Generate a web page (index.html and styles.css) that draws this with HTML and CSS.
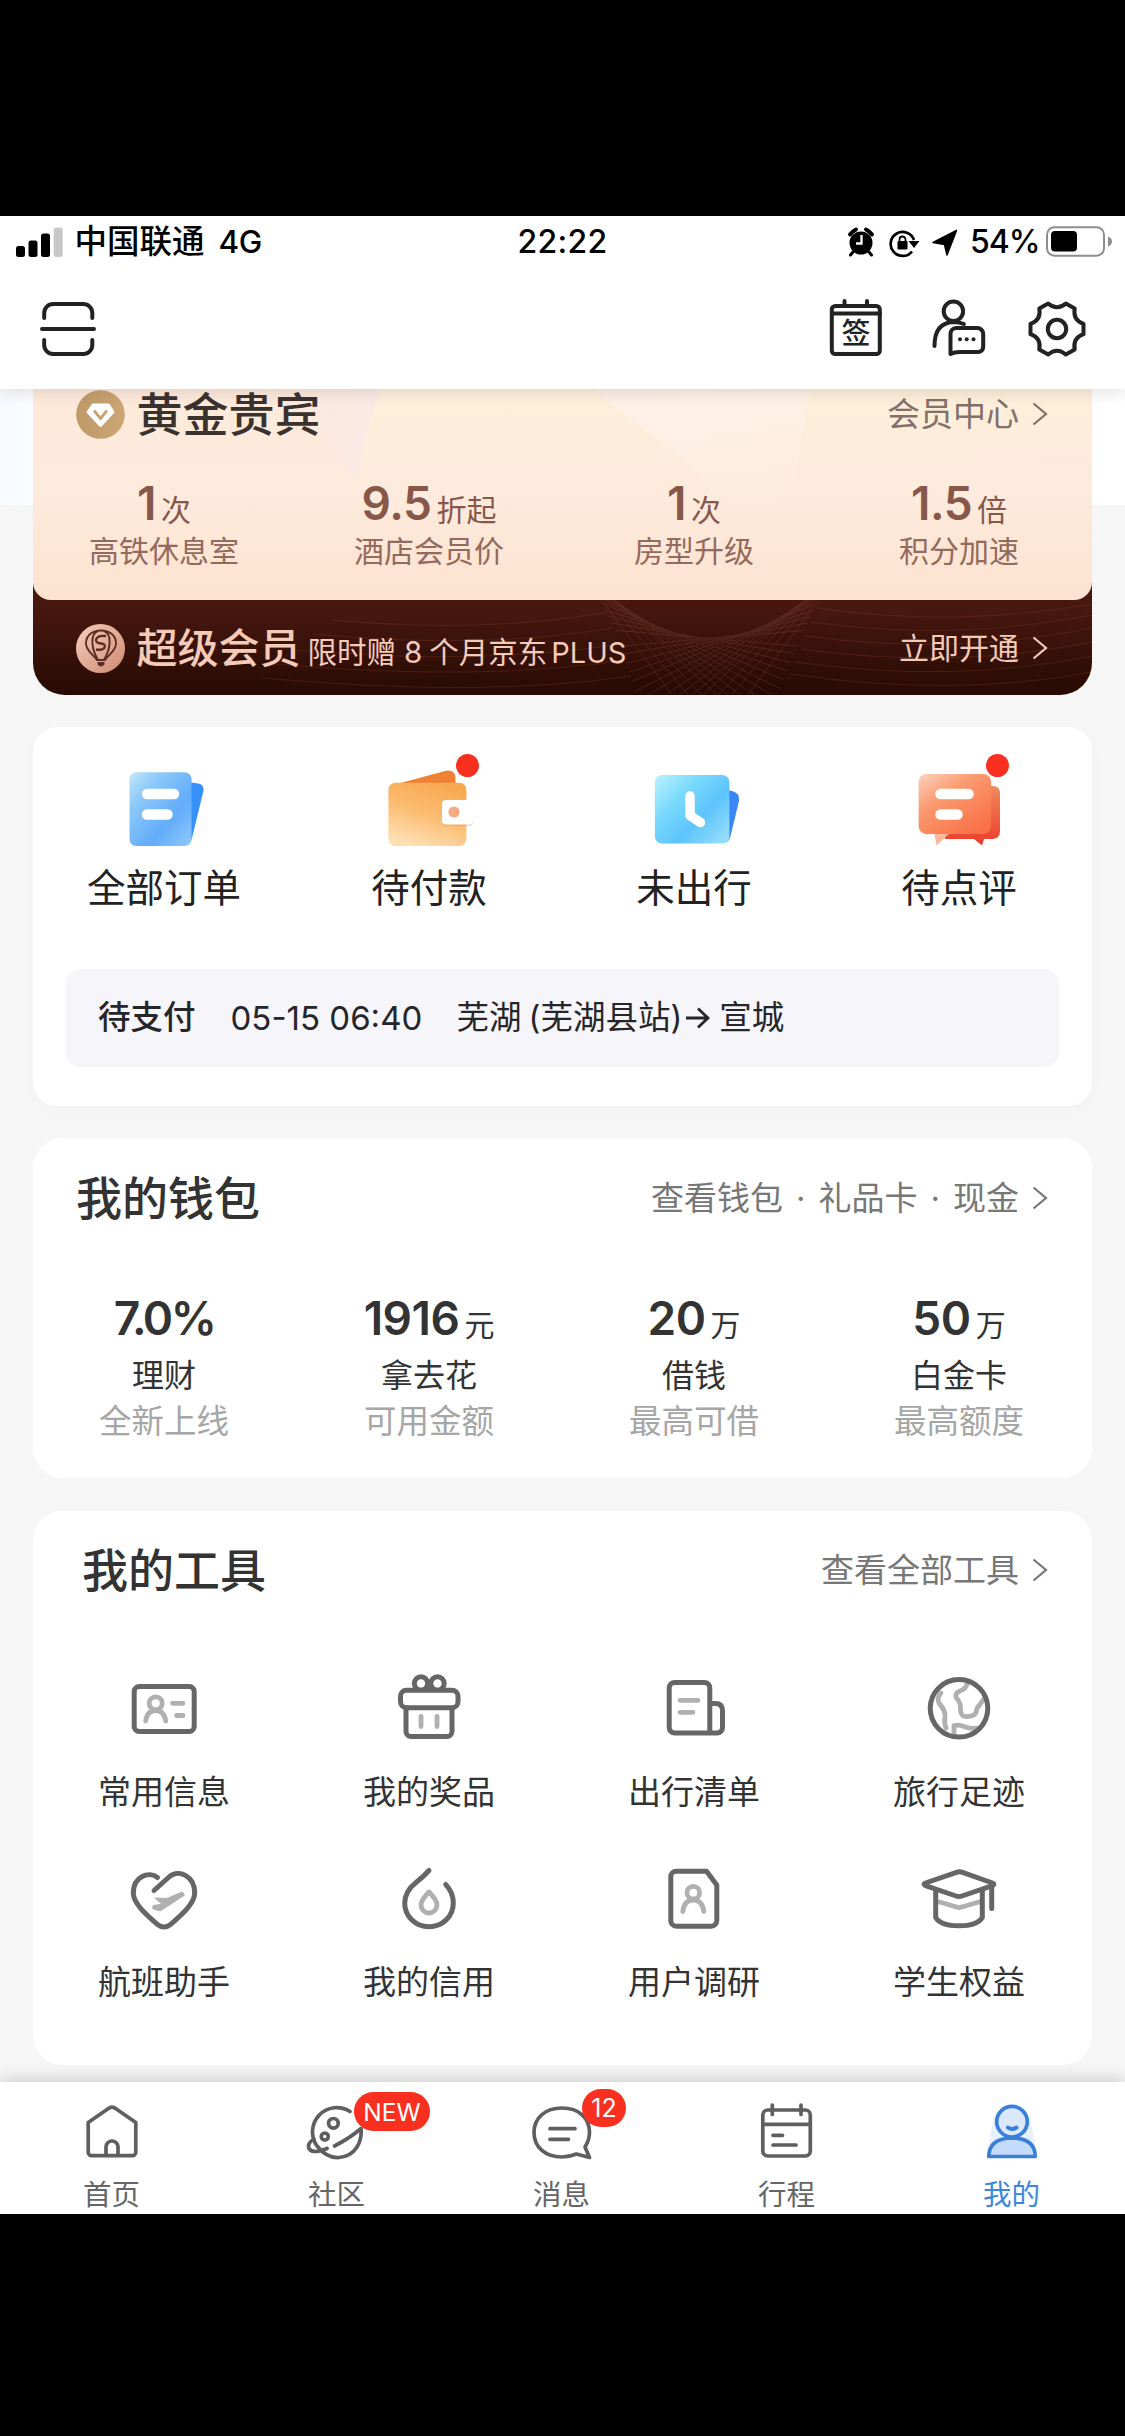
FILE: index.html
```html
<!DOCTYPE html>
<html lang="zh-CN">
<head>
<meta charset="utf-8">
<title>我的</title>
<link rel="stylesheet" href="styles.css">
</head>
<body>
<div class="app">
  <header class="top">
    <div class="status">
      <svg class="signal" width="48" height="30" viewBox="0 0 48 30"><rect x="0" y="19" width="9" height="11" rx="2.5"/><rect x="12.5" y="13.5" width="9" height="16.5" rx="2.5"/><rect x="25" y="6.500" width="9" height="23.500" rx="2.500"/><rect x="37.700" y="0.500" width="9" height="29.500" rx="2.500" fill="#c8c8c8"/></svg>
      <span class="carrier">中国联通</span>
      <span class="network">4G</span>
      <span class="clock">22:22</span>
      <span class="status-right">
        <svg width="100" height="32" viewBox="0 0 100 32">
          <circle cx="13" cy="17" r="11.500"/>
          <path d="M2 8.500a18 18 0 0 1 6-5M24 8.500a18 18 0 0 0-6-5" stroke="#000" stroke-width="4" stroke-linecap="round" fill="none"/>
          <path d="M5 26l-2.500 3M21 26l2.500 3" stroke="#000" stroke-width="3" stroke-linecap="round"/>
          <path d="M13.500 9v8.500H8" stroke="#fff" stroke-width="2.300" fill="none"/>
          <path d="M64 25.500A12 12 0 1 1 66 14" stroke="#000" stroke-width="2.700" fill="none"/>
          <path d="M60.500 15h11l-5.500 7z"/><rect x="49.500" y="15" width="10" height="8.500" rx="1.200"/><path d="M51.500 15.500v-2a3 3 0 0 1 6 0v2" stroke="#000" stroke-width="1.800" fill="none"/>
          <path d="M85.500 17.500L109 5.500 99.500 30 97 19.500z" stroke="#000" stroke-width="1.500" stroke-linejoin="round" transform="translate(-.5 -1)"/>
        </svg>
        <span class="percent">54%</span>
        <svg width="66" height="31" viewBox="0 0 66 31"><rect x="1" y="1.200" width="57" height="28.500" rx="7.500" fill="none" stroke="#8e8e8e" stroke-width="2"/><rect x="5" y="5" width="26" height="20.500" rx="4"/><path d="M62 10.500q4 1.500 4 5t-4 5z" fill="#8e8e8e"/></svg>
      </span>
    </div>
    <nav class="toolbar">
      <svg class="line-icon" width="64" height="66" viewBox="0 0 64 66"><path d="M8.200 22v-5a9 9 0 0 1 9-9h30.100a9 9 0 0 1 9 9v5M6 33h52M8.200 44v5a9 9 0 0 0 9 9h30.100a9 9 0 0 0 9-9v-5"/></svg>
      <div class="actions">
        <svg class="line-icon" width="64" height="66" viewBox="0 0 64 66"><rect x="7.800" y="10" width="48" height="48" rx="3.500"/><path d="M8 17.500h48M20.500 5v4M43 5v4"/><text x="32" y="47.500" class="sign">签</text></svg>
        <svg class="line-icon" width="64" height="66" viewBox="0 0 64 66"><circle cx="27.400" cy="15.300" r="9.700"/><path d="M8.500 50C8.500 34 15 26.500 27.400 26c4.500 0 7.500.8 10.500 2"/><path d="M24.500 58V38a6 6 0 0 1 6-6h20.700a6 6 0 0 1 6 6v13a5 5 0 0 1-5 5H34q-6 0-9.500 2z"/><g fill="#222" stroke="none"><circle cx="34" cy="43.300" r="2"/><circle cx="40.700" cy="43.300" r="2"/><circle cx="47.500" cy="43.300" r="2"/></g></svg>
        <svg class="line-icon" width="64" height="66" viewBox="-32 -33 64 66"><circle r="9.200"/><path d="M26.500 5.200Q15.600 9 17.700 20.400L8.800 25.500Q0 18-8.800 25.500L-17.700 20.400Q-15.600 9-26.500 5.200V-5.200Q-15.600-9-17.700-20.400L-8.800-25.500Q0-18 8.800-25.500L17.700-20.400Q15.600-9 26.500-5.200Z"/></svg>
      </div>
    </nav>
  </header>

  <main class="content">
    <section class="member">
      <div class="gold">
        <svg class="facets" viewBox="0 0 1059 211" preserveAspectRatio="none"><defs><linearGradient id="pinkFade" x1="0" x2="1"><stop offset="0" stop-color="#f9e9ea" stop-opacity="0"/><stop offset="1" stop-color="#f9e9ea" stop-opacity=".75"/></linearGradient><linearGradient id="creamFade" x1="0" y1="0" x2="0" y2="1"><stop offset="0" stop-color="#fdf0da"/><stop offset="1" stop-color="#fdf0da" stop-opacity="0"/></linearGradient><linearGradient id="paleFade" x1="0" y1="0" x2=".3" y2="1"><stop offset=".1" stop-color="#fdf1ea" stop-opacity=".9"/><stop offset="1" stop-color="#fdf1ea" stop-opacity="0"/></linearGradient></defs><path d="M345 0H1059V60Q700 110 325 80Z" fill="url(#creamFade)"/><path d="M250 0H346L322 90Z" fill="url(#pinkFade)"/><path d="M560 0H778L750 150Z" fill="url(#paleFade)"/></svg>
        <div class="member-head">
          <svg width="50" height="50" viewBox="0 0 50 50"><defs><linearGradient id="coin" x1="0" x2="1"><stop offset="0" stop-color="#bd9a68"/><stop offset="1" stop-color="#cda574"/></linearGradient></defs><circle cx="24.500" cy="25.500" r="24.300" fill="url(#coin)"/><path d="M17 16h15.500l4.500 7-12.500 13.500L12 23z" fill="#fff" stroke="#fff" stroke-width="3" stroke-linejoin="round"/><path d="M18 21.500l6.500 8 6.500-8" stroke="#c9a36f" stroke-width="2.800" fill="none"/></svg>
          <h2>黄金贵宾</h2>
          <a class="more">会员中心<svg class="chev" width="16" height="24" viewBox="0 0 16 24"><path d="M1.500 1.500L14 12 1.500 22.500"/></svg></a>
        </div>
        <div class="grid perks">
          <div><p class="num">1<small>次</small></p><p class="perk">高铁休息室</p></div>
          <div><p class="num">9.5<small>折起</small></p><p class="perk">酒店会员价</p></div>
          <div><p class="num">1<small>次</small></p><p class="perk">房型升级</p></div>
          <div><p class="num">1.5<small>倍</small></p><p class="perk">积分加速</p></div>
        </div>
      </div>
      <div class="super">
        <svg class="mesh" viewBox="0 0 1059 95">
          <defs><clipPath id="net"><path d="M567 0H785Q765 40 745 95H602Q590 40 567 0Z"/></clipPath>
          <path id="rays" d="M-110 29L110 48M-110 21L110 58M-110 14L110 70M-110 8L110 82M-110 2L110 95M-110-2L110 109M-110-6L110 123M-110-9L110 139M-110-11L110 155M-110-12L110 172M-110-13L110 190M-110-12L110 219M-110-9L110 250M-110-2L110 293"/></defs>
          <g clip-path="url(#net)" stroke="#a06050" stroke-width="1" opacity=".24"><use href="#rays" transform="translate(677)"/><use href="#rays" transform="translate(677) scale(-1 1)"/></g>
          <g fill="none" stroke="#8f4636" opacity=".28"><path d="M785 8Q920 28 1059 4M778 22Q920 42 1059 15M772 36Q920 56 1059 28M768 49Q920 70 1059 42M762 62Q920 84 1059 56M757 74Q920 98 1059 72M575 12Q450 34 300 20M580 28Q450 50 280 34M586 44Q450 66 260 50M592 60Q450 82 240 64M598 76Q450 98 230 78"/></g>
        </svg>
        <svg class="badge" width="50" height="50" viewBox="0 0 50 50"><defs><linearGradient id="rose" x1="0" y1="0" x2="1" y2="1"><stop offset="0" stop-color="#f7cdbd"/><stop offset="1" stop-color="#cd8a72"/></linearGradient></defs><circle cx="24.500" cy="25.500" r="24.500" fill="url(#rose)"/><g fill="none" stroke="#5d2c22" stroke-width="1.900"><path d="M21 37C17 31 10 28 10 20.500 10 12 17 7.500 25 7.500S40 12 40 20.500C40 28 33 31 29 37ZM22 37C15 25 14 11 22 8M28 37C35 25 36 11 28 8"/><path d="M30 13q-9-1-10 4 0 3 5 3.500t3.500 4q-1.500 3-8.500 2" stroke-width="2.300"/></g><path d="M21.500 39h7v2.500q-3.500 4-7 0z" fill="#5d2c22"/></svg>
        <h3>超级会员</h3><p class="promo">限时赠<i>8</i>个月京东<b>PLUS</b></p>
        <a class="more">立即开通<svg class="chev" width="16" height="24" viewBox="0 0 16 24"><path d="M1.500 1.500L14 12 1.500 22.500"/></svg></a>
      </div>
    </section>

    <section class="card orders">
      <div class="grid">
        <div class="order">
          <svg width="96" height="90" viewBox="0 0 96 90"><defs><linearGradient id="b1" x1="0" y1="0" x2="1" y2="1"><stop offset="0" stop-color="#c3e7fc"/><stop offset=".25" stop-color="#8fcaf9"/><stop offset=".65" stop-color="#62acfa"/><stop offset="1" stop-color="#8fc9fb"/></linearGradient></defs><path d="M60 14l22 3.500q6 1 5.500 7L76 72q-2 7-8 7z" fill="#3590f8"/><rect x="13.500" y="6.300" width="62" height="73.700" rx="7" fill="url(#b1)"/><path d="M31 28h27M31 48.500h20.500" stroke="#fff" stroke-width="10.500" stroke-linecap="round"/></svg>
          <p>全部订单</p>
        </div>
        <div class="order">
          <span class="dot"></span>
          <svg width="96" height="90" viewBox="0 0 96 90"><defs><linearGradient id="o1" x1=".7" y1="0" x2=".3" y2="1"><stop offset="0" stop-color="#f8a84e"/><stop offset=".5" stop-color="#fbbc72"/><stop offset="1" stop-color="#fee0b5"/></linearGradient></defs><path d="M12 19L64 5q9-2 10.500 6v12H12z" fill="#ee8134"/><rect x="7.400" y="16.700" width="78" height="63.300" rx="7" fill="url(#o1)"/><rect x="61" y="36" width="31" height="24" rx="4" fill="#c98a5a" opacity=".3"/><rect x="61" y="34" width="31" height="24.500" rx="4" fill="#fff"/><circle cx="73" cy="46" r="5.600" fill="#f7a981"/></svg>
          <p>待付款</p>
        </div>
        <div class="order">
          <svg width="96" height="90" viewBox="0 0 96 90"><defs><linearGradient id="c1" x1="0" y1="0" x2="1" y2=".9"><stop offset="0" stop-color="#bcf1fb"/><stop offset=".35" stop-color="#79d9fd"/><stop offset=".65" stop-color="#5dc4fc"/><stop offset="1" stop-color="#96defb"/></linearGradient></defs><path d="M72 22l14 3q8 2 7 10L84 72q-2 5-7 5z" fill="#3a86f6"/><rect x="8.900" y="9" width="74.500" height="68.500" rx="7" fill="url(#c1)"/><path d="M44 30v19.500l10.500 7" stroke="#fff" stroke-width="9.500" stroke-linecap="round" stroke-linejoin="round" fill="none"/></svg>
          <p>未出行</p>
        </div>
        <div class="order">
          <span class="dot"></span>
          <svg width="96" height="90" viewBox="0 0 96 90"><defs><linearGradient id="r1" x1="0" y1="0" x2=".8" y2="1"><stop offset="0" stop-color="#fcd2bd"/><stop offset=".4" stop-color="#fa9a70"/><stop offset="1" stop-color="#fb6f45"/></linearGradient><linearGradient id="r2" x1="0" y1="0" x2="0" y2="1"><stop offset="0" stop-color="#f08a5b"/><stop offset="1" stop-color="#ed3a2c"/></linearGradient></defs><path d="M34 20h48q7 0 7 8v37q0 8-8 8h-8l-2 6.500-8-6.500H34z" fill="url(#r2)"/><path d="M23 66l2.500 13.500L40 66z" fill="#fdb79d"/><rect x="7.600" y="8" width="72.500" height="60" rx="8" fill="url(#r1)"/><path d="M29.500 28h28M29.500 48.500h17" stroke="#fff" stroke-width="10.500" stroke-linecap="round"/></svg>
          <p>待点评</p>
        </div>
      </div>
      <div class="pending"><strong>待支付</strong><time>05-15 06:40</time><span>芜湖<i>(</i>芜湖县站)</span><svg width="25" height="26" viewBox="0 0 25 26"><path d="M1 13h22M13 3.500L23 13 13 22.500"/></svg><span>宣城</span></div>
    </section>

    <section class="card wallet">
      <div class="card-head"><h2>我的钱包</h2><a class="more">查看钱包<i>·</i>礼品卡<i>·</i>现金<svg class="chev" width="16" height="24" viewBox="0 0 16 24"><path d="M1.500 1.500L14 12 1.500 22.500"/></svg></a></div>
      <div class="grid">
        <div><p class="num rate">7.0%</p><p class="name">理财</p><p class="hint">全新上线</p></div>
        <div><p class="num">1916<small>元</small></p><p class="name">拿去花</p><p class="hint">可用金额</p></div>
        <div><p class="num">20<small>万</small></p><p class="name">借钱</p><p class="hint">最高可借</p></div>
        <div><p class="num">50<small>万</small></p><p class="name">白金卡</p><p class="hint">最高额度</p></div>
      </div>
    </section>

    <section class="card tools">
      <div class="card-head"><h2>我的工具</h2><a class="more">查看全部工具<svg class="chev" width="16" height="24" viewBox="0 0 16 24"><path d="M1.500 1.500L14 12 1.500 22.500"/></svg></a></div>
      <div class="grid tool-grid">
        <div class="tool"><svg viewBox="0 0 80 76"><g class="soft"><circle cx="31.700" cy="33.300" r="6.500"/><path d="M21.700 51q1.500-10.500 10-10.500t10 10.500M48.500 33.300H59M52.500 45.500H59"/></g><rect x="10.200" y="16.500" width="60" height="45" rx="5"/></svg><p>常用信息</p></div>
        <div class="tool"><svg viewBox="0 0 80 76"><path class="soft" d="M32 46.500v10M48 46.500v10"/><circle cx="32" cy="13.500" r="6.700"/><circle cx="48.500" cy="13.500" r="6.700"/><rect x="11.500" y="20.200" width="57.500" height="17.500" rx="6" fill="#fff"/><path d="M17 38v23.500a5 5 0 0 0 5 5h36a5 5 0 0 0 5-5V38"/></svg><p>我的奖品</p></div>
        <div class="tool"><svg viewBox="0 0 80 76"><path class="soft" d="M26 30.300h18M26 42.300h13"/><path d="M55.800 63V18a5.500 5.500 0 0 0-5.500-5.500h-29.600a5.500 5.500 0 0 0-5.500 5.500v39.500a5.500 5.500 0 0 0 5.500 5.500h42.300a5.500 5.500 0 0 0 5.500-5.500V40.500q0-7-7-7H56"/></svg><p>出行清单</p></div>
        <div class="tool"><svg viewBox="0 0 80 76"><path class="soft" d="M22 23q-5 5-1.500 11 6 6 5.500 13-1 6 1 11M48 14q-1 5-7 7-6 3-3.500 7 4.500 5 4 11 0 8 6 7.500 8 0 9.500-4 .5-5 4-8l4-6M35 66V55.500q5-1 10 1 6 2.500 12 1.500"/><circle cx="40" cy="38.300" r="28.800"/></svg><p>旅行足迹</p></div>
        <div class="tool"><svg viewBox="0 -2 80 76"><path d="M31.700 36.300l11.600.4 15-6.400 1.700 2.700-24 15.500-7-2 .5-2.800 9-1.400z" fill="#b0b0b0" stroke="#b0b0b0" stroke-width="1.500" stroke-linejoin="round"/><path d="M33.500 15.500C25 9 9.300 14 9.300 31 9.300 42 24 54 33.500 62.500Q40 67.500 46.500 62.500C56 54 70.700 42 70.700 31 70.700 14 54.500 6 44.500 15.500L30 28.500"/></svg><p>航班助手</p></div>
        <div class="tool"><svg viewBox="0 -2 80 76"><path class="soft" d="M40 30q-8 8-8 13a8 8 0 0 0 16 0q0-5-8-13z"/><path d="M40 8.500Q34 15 27 20.500C20 26 15.700 34 15.700 41.300a24.300 23.500 0 0 0 48.600 0C64.300 33 62 28 56.700 22.500"/></svg><p>我的信用</p></div>
        <div class="tool"><svg viewBox="0 -2 80 76"><g class="soft"><circle cx="39.300" cy="30.700" r="6.300"/><path d="M28.800 49.500q1.500-11.500 10.500-11.500t10.500 11.500"/></g><path d="M22.300 9.200h30.200L62.800 23v35.700a5.500 5.500 0 0 1-5.500 5.500h-35a5.500 5.500 0 0 1-5.500-5.500V14.700a5.500 5.500 0 0 1 5.500-5.500z"/></svg><p>用户调研</p></div>
        <div class="tool"><svg viewBox="0 -2 80 76"><path class="soft" d="M20.700 40L40 45.700 60 40"/><path d="M16.700 28v27.500q5 8.300 23.300 8.300t23.300-8.300V28M72.700 25v21.500"/><path d="M37.500 10.300q3-1 6 0L73.500 21q3 1.300 0 2.600L43 34q-3 1.200-6 0L6.500 23.600q-3-1.300 0-2.600z" fill="#fff"/></svg><p>学生权益</p></div>
      </div>
    </section>
  </main>

  <nav class="tabs">
    <div class="tab"><svg viewBox="0 0 64 64"><path d="M8.200 22.500L29.500 7.800q2.500-1.500 5 0L55.800 22.500V52.200a3.500 3.500 0 0 1-3.500 3.500H11.700a3.500 3.500 0 0 1-3.500-3.500zM26 55V47a6 6 0 0 1 12 0v8"/></svg><p>首页</p></div>
    <div class="tab"><svg viewBox="0 0 64 64"><path d="M45 11.500A24.300 24.300 0 0 0 12 46q10 12.500 22 11.500 12-1 18-10.500 5-8 4-18.500Q45 38 29.500 46M9 39q-7 4-5 9.500 3.500 6 18 0"/><circle cx="28.400" cy="23.300" r="4.800"/><circle cx="19.800" cy="36.500" r="3.500"/></svg><span class="pill new">NEW</span><p>社区</p></div>
    <div class="tab"><svg viewBox="0 0 64 64"><path d="M59.500 57.500L55 47q4.500-7 4.500-14.500C59.500 18 49 8 32 8S4 18 4 32.500 15 57 32 57q7 0 14.500-3zM20 28.700h25M20 39.300h18.500"/></svg><span class="pill count">12</span><p>消息</p></div>
    <div class="tab"><svg viewBox="0 0 64 64"><rect x="7.800" y="10" width="47.500" height="46" rx="5"/><path d="M8 24.300h47M17.300 5v9.500M46 5v9.500M18 35.300h9.500M18 45h23"/></svg><p>行程</p></div>
    <div class="tab active"><svg viewBox="0 0 64 64"><path d="M14 16h36l7 41H7z" fill="#dceaff" stroke="none" opacity=".7"/><path d="M8.800 56.500q0-18 23.200-18.500 23.200.5 23.200 18.500z" fill="#c5dbfa"/><circle cx="32" cy="21.700" r="15.300" fill="#dbe8fb"/><path d="M28 27.500q4 3 8.500 0" stroke-width="4"/></svg><p>我的</p></div>
  </nav>
</div>
</body>
</html>
```
FILE: styles.css
```css
* { box-sizing: border-box; margin: 0; padding: 0; }
body {
  width: 1125px;
  height: 2436px;
  padding: 216px 0 222px;
  background: #000;
  color: #333;
  font-family: Inter, "Noto Sans CJK SC", sans-serif;
  overflow: hidden;
}
svg { display: block; flex: none; }
i, b { font-style: normal; font-weight: inherit; }
.app {
  display: flex;
  flex-direction: column;
  height: 1998px;
  background: #f6f6f6;
  overflow: hidden;
}

/* status bar and toolbar */
.top {
  position: relative;
  z-index: 2;
  flex: none;
  height: 173px;
  background: #fff;
  box-shadow: 0 4px 14px rgba(60, 50, 50, .13);
}
.status {
  position: relative;
  display: flex;
  align-items: center;
  height: 51px;
  padding: 0 13px 0 16px;
  color: #000;
  font-size: 32px;
  line-height: 40px;
}
.carrier { margin-left: 10.500px; padding-top: 1px; font-size: 32.500px; font-weight: 500; }
.network { margin-left: 14px; font-size: 31.500px; font-weight: 500; letter-spacing: -.5px; }
.clock { position: absolute; left: 0; right: 0; text-align: center; font-weight: 500; letter-spacing: .3px; }
.status-right { display: flex; align-items: center; margin-left: auto; }
.status-right svg:first-child { overflow: visible; margin-right: 22px; }
.percent { width: 76px; font-weight: 500; letter-spacing: -1px; }
.toolbar { display: flex; justify-content: space-between; padding: 29px 36px 0; }
.actions { display: flex; gap: 38px; }
.actions svg:last-child { margin-left: -3px; }
.line-icon { fill: none; stroke: #222; stroke-width: 4; stroke-linecap: round; stroke-linejoin: round; }
.sign { fill: #222; stroke: none; font-size: 29px; font-weight: 500; text-anchor: middle; }

/* scroll area */
.content {
  flex: none;
  height: 1693px;
  padding: 0 33px;
  background: linear-gradient(to right, #f7faff, #fff 60px) no-repeat 0 0 / 100% 116px;
}
.grid { display: grid; grid-template-columns: repeat(4, 265px); justify-content: center; text-align: center; }
.grid > div { position: relative; left: -1px; }
.more { display: flex; align-items: center; margin-left: auto; color: #777; font-size: 33px; line-height: 40px; }
.chev { margin-left: 13px; fill: none; stroke: currentColor; stroke-width: 2.200; }
.num { height: 40px; font-size: 46px; font-weight: 600; line-height: 40px; letter-spacing: -.5px; white-space: nowrap; }
.num.rate { letter-spacing: -2.500px; }
.num small { position: relative; top: 1px; margin-left: 5px; font-size: 30px; font-weight: 400; line-height: 30px; letter-spacing: 0; }

/* membership */
.member {
  height: 306px;
  border-radius: 0 0 32px 32px;
  background: linear-gradient(#4a170d 190px, #471810 220px, #260a02 306px);
  overflow: hidden;
}
.gold {
  position: relative;
  height: 211px;
  border-radius: 0 0 18px 18px;
  background: linear-gradient(#fdeadb, #fdebdd 50%, #fde2d0);
}
.facets { position: absolute; inset: 0; width: 100%; height: 100%; }
.member-head { position: relative; display: flex; align-items: center; height: 50px; padding: 0 44px 0 43px; }
.member-head h2 { margin-left: 10.500px; color: #3a322f; font-size: 46px; font-weight: 500; line-height: 50px; }
.member-head .more { color: #83706a; }
.perks { position: relative; margin-top: 44px; color: #87584a; }
.perk { margin-top: 10px; color: #946a5d; font-size: 30px; line-height: 36px; }
.super { position: relative; display: flex; align-items: center; height: 95px; padding: 0 44px 0 43px; color: #f4cbb9; }
.mesh { position: absolute; inset: 0; }
.super > :not(.mesh) { position: relative; }
.super h3 { margin-left: 10.500px; font-size: 41px; font-weight: 500; line-height: 50px; }
.promo { top: 5px; margin-left: 7px; font-size: 29.500px; line-height: 40px; }
.promo i { margin: 0 7px 0 8px; }
.promo b { margin-left: 4px; font-size: 29px; }
.super .more { color: inherit; font-size: 30px; }

/* cards */
.card { border-radius: 30px; background: #fff; }
.card h2 { font-size: 46px; font-weight: 500; line-height: 60px; }
.card-head { display: flex; align-items: center; padding: 0 44px 0 43px; }
.orders { height: 379px; margin-top: 32px; padding-top: 39px; border-radius: 24px; box-shadow: 0 4px 20px rgba(0, 0, 0, .015); }
.order { display: flex; flex-direction: column; align-items: center; color: #222; font-size: 38.500px; line-height: 44px; }
.order p { margin-top: 10px; }
.dot { position: absolute; left: 159px; top: -12px; width: 23px; height: 23px; border-radius: 50%; background: #f92f20; }
.pending {
  display: flex;
  align-items: center;
  height: 98px;
  margin: 59px 33px 0;
  padding-left: 32px;
  border-radius: 15px;
  background: #f5f5fa;
  color: #26262a;
  font-size: 32.500px;
  line-height: 40px;
}
.pending strong { font-weight: 500; }
.pending time { width: 191px; margin: 0 35px; font-size: 33px; white-space: nowrap; }
.pending i { margin-left: 7px; }
.pending svg { margin: 0 9px 0 3px; fill: none; stroke: currentColor; stroke-width: 2.800; }

.wallet { height: 340px; margin-top: 32px; padding-top: 30px; }
.wallet .grid { margin-top: 70px; }
.wallet .more i { margin: 0 13px; }
.name { margin-top: 18px; font-size: 32px; line-height: 40px; }
.hint { margin-top: 6px; color: #a6a6a6; font-size: 32.500px; line-height: 40px; }

.tools { height: 554px; margin-top: 33px; padding-top: 29px; }
.tools .card-head { padding-left: 49px; }
.tool-grid { row-gap: 48px; margin-top: 70px; }
.tool { display: flex; flex-direction: column; align-items: center; font-size: 33px; line-height: 40px; }
.tool svg { width: 80px; height: 76px; fill: none; stroke: #666; stroke-width: 5; stroke-linecap: round; stroke-linejoin: round; }
.tool .soft { stroke: #b0b0b0; stroke-width: 4.800; }
.tool p { margin-top: 26px; }

/* bottom tabs */
.tabs {
  position: relative;
  z-index: 2;
  display: grid;
  grid-template-columns: repeat(5, 225px);
  flex: none;
  height: 132px;
  padding-top: 18px;
  background: #fff;
  box-shadow: 0 -3px 16px rgba(0, 0, 0, .16);
}
.tab { position: relative; left: -1px; display: flex; flex-direction: column; align-items: center; color: #666; font-size: 28.500px; line-height: 32px; }
.tab svg { width: 64px; height: 64px; fill: none; stroke: #5f5f5f; stroke-width: 3.700; stroke-linecap: round; stroke-linejoin: round; }
.tab p { margin-top: 15px; }
.tab.active { color: #3d86de; }
.tab.active svg { stroke: #3a80d8; }
.pill { position: absolute; display: flex; align-items: center; justify-content: center; border-radius: 20px; background: #f92f20; color: #fff; }
.new { left: 130px; top: -8px; width: 76px; height: 39px; font-size: 24.500px; }
.count { left: 133px; top: -11px; width: 44px; height: 38px; font-size: 25px; }
```
